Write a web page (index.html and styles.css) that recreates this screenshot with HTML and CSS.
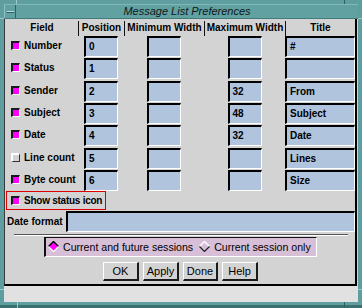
FILE: index.html
```html
<!DOCTYPE html>
<html>
<head>
<meta charset="utf-8">
<link rel="stylesheet" href="styles.css">
</head>
<body>
<div class="frame">
  <div class="titlebar">
    <div class="menubtn"><span class="bar"></span></div>
    <div class="title">Message List Preferences</div>
  </div>
  <div class="client">
    <div class="form">
      <div class="cols header">
        <div class="hcell">Field</div>
        <div class="hcell sepl">Position</div>
        <div class="hcell sepl">Minimum Width</div>
        <div class="hcell sepl">Maximum Width</div>
        <div class="hcell sepl">Title</div>
      </div>
      <div class="cols rows">
        <div class="fcell"><span class="cb on"></span>Number</div>
        <div class="cell"><div class="box pos">0</div></div>
        <div class="cell"><div class="box num"></div></div>
        <div class="cell"><div class="box num"></div></div>
        <div class="cell"><div class="box ttl">#</div></div>

        <div class="fcell"><span class="cb on"></span>Status</div>
        <div class="cell"><div class="box pos">1</div></div>
        <div class="cell"><div class="box num"></div></div>
        <div class="cell"><div class="box num"></div></div>
        <div class="cell"><div class="box ttl"></div></div>

        <div class="fcell"><span class="cb on"></span>Sender</div>
        <div class="cell"><div class="box pos">2</div></div>
        <div class="cell"><div class="box num"></div></div>
        <div class="cell"><div class="box num">32</div></div>
        <div class="cell"><div class="box ttl">From</div></div>

        <div class="fcell"><span class="cb on"></span>Subject</div>
        <div class="cell"><div class="box pos">3</div></div>
        <div class="cell"><div class="box num"></div></div>
        <div class="cell"><div class="box num">48</div></div>
        <div class="cell"><div class="box ttl">Subject</div></div>

        <div class="fcell"><span class="cb on"></span>Date</div>
        <div class="cell"><div class="box pos">4</div></div>
        <div class="cell"><div class="box num"></div></div>
        <div class="cell"><div class="box num">32</div></div>
        <div class="cell"><div class="box ttl">Date</div></div>

        <div class="fcell"><span class="cb"></span>Line count</div>
        <div class="cell"><div class="box pos">5</div></div>
        <div class="cell"><div class="box num"></div></div>
        <div class="cell"><div class="box num"></div></div>
        <div class="cell"><div class="box ttl">Lines</div></div>

        <div class="fcell"><span class="cb on"></span>Byte count</div>
        <div class="cell"><div class="box pos">6</div></div>
        <div class="cell"><div class="box num"></div></div>
        <div class="cell"><div class="box num"></div></div>
        <div class="cell"><div class="box ttl">Size</div></div>
      </div>
      <div class="togglerow"><div class="focus"><span class="cb on"></span><span class="flbl">Show status icon</span></div></div>
      <div class="datefmt"><span class="dlbl">Date format</span><div class="box wide"></div></div>
      <div class="sep"></div>
      <div class="radiobox">
        <span class="ritem"><svg class="dia" width="11" height="11" viewBox="0 0 11 11"><polygon points="5.5,0.5 10.5,5.5 5.5,10.5 0.5,5.5" fill="#ff00ff"/><polyline points="0.5,5.5 5.5,0.5 10.5,5.5" fill="none" stroke="#000" stroke-width="1.4"/><polyline points="0.5,5.5 5.5,10.5 10.5,5.5" fill="none" stroke="#fff" stroke-width="1.2"/></svg>Current and future sessions</span>
        <span class="ritem"><svg class="dia" width="11" height="11" viewBox="0 0 11 11"><polygon points="5.5,0.5 10.5,5.5 5.5,10.5 0.5,5.5" fill="#d8bfd8"/><polyline points="0.5,5.5 5.5,0.5 10.5,5.5" fill="none" stroke="#fff" stroke-width="1.4"/><polyline points="0.5,5.5 5.5,10.5 10.5,5.5" fill="none" stroke="#222" stroke-width="1.2"/></svg>Current session only</span>
      </div>
      <div class="buttons">
        <div class="btn w36">OK</div>
        <div class="btn w36">Apply</div>
        <div class="btn w35">Done</div>
        <div class="btn w36">Help</div>
      </div>
    </div>
    <div class="status"></div>
  </div>
  <span class="mark mt1"></span>
  <span class="mark mt2"></span>
  <span class="mark mb1"></span>
  <span class="mark mb2"></span>
  <span class="mark ml1"></span>
  <span class="mark ml2"></span>
  <span class="mark mr1"></span>
  <span class="mark mr2"></span>
</div>
</body>
</html>
```

FILE: styles.css
```css
html, body {
  margin: 0;
  padding: 0;
}
body {
  width: 362px;
  height: 308px;
  overflow: hidden;
  font-family: "Liberation Sans", Arial, sans-serif;
  color: #000;
}
.frame {
  position: relative;
  box-sizing: border-box;
  width: 362px;
  height: 308px;
  padding: 4px 4px 3px 4px;
  background: #5f9ea0;
  border-bottom: 3px solid #3b7070;
}
.titlebar {
  display: flex;
  height: 15px;
  box-sizing: border-box;
  border-top: 1px solid #80b8b8;
  border-bottom: 1px solid #437a7a;
  background: #62a1a2;
}
.menubtn {
  width: 12px;
  box-sizing: border-box;
  border-left: 1px solid #8cc2c2;
  border-right: 1px solid #2f5f60;
  display: flex;
  align-items: center;
  justify-content: center;
}
.bar {
  display: block;
  width: 7px;
  height: 2px;
  border-top: 1px solid #b8dede;
  border-bottom: 1px solid #2f5f60;
  box-sizing: border-box;
}
.title {
  flex: 1;
  text-align: center;
  font-style: italic;
  font-size: 11px;
  line-height: 13px;
  color: #101818;
}
.client {
  background: #d3d3d3;
  height: 283px;
}
.form {
  box-sizing: border-box;
  height: 267px;
  margin-right: 1px;
  padding: 2px 0 0 1px;
  border-left: 1px solid #3a3a3a;
  border-right: 2px solid #000;
  border-bottom: 2px solid #000;
  font-size: 10px;
  font-weight: bold;
}
.cols {
  display: grid;
  grid-template-columns: 72px 46px 80px 81px 70px;
}
.header {
  height: 15px;
}
.hcell {
  text-align: center;
  line-height: 14px;
  font-size: 10px;
  font-weight: bold;
}
.sepl {
  border-left: 1px solid #111;
}
.rows {
  grid-auto-rows: 21px;
  row-gap: 1.33px;
}
.fcell {
  display: flex;
  align-items: center;
  padding-left: 5px;
  padding-bottom: 2px;
  white-space: nowrap;
}
.cb {
  display: inline-block;
  flex: none;
  box-sizing: border-box;
  width: 9px;
  height: 9px;
  margin-right: 4px;
  border-top: 2px solid #fff;
  border-left: 2px solid #fff;
  border-right: 1px solid #333;
  border-bottom: 1px solid #333;
  background: #d3d3d3;
}
.cb.on {
  border-top-color: #1a1a1a;
  border-left-color: #1a1a1a;
  border-right-color: #fff;
  border-bottom-color: #fff;
  background: #ff00ff;
}
.cell {
  display: flex;
  justify-content: center;
}
.box {
  box-sizing: border-box;
  height: 21px;
  background: #b0c4de;
  border-top: 2px solid #000;
  border-left: 2px solid #000;
  border-right: 1px solid #fff;
  border-bottom: 1px solid #fff;
  padding-left: 3px;
  line-height: 18px;
  font-size: 10px;
  font-weight: bold;
}
.pos { width: 34px; }
.num { width: 34px; }
.ttl { width: 70px; }
.togglerow {
  height: 20px;
}
.focus {
  box-sizing: border-box;
  width: 100px;
  height: 19px;
  border: 1px solid #e00000;
  display: flex;
  align-items: center;
  padding-left: 4px;
  white-space: nowrap;
}
.flbl {
  letter-spacing: -0.25px;
}
.datefmt {
  display: flex;
  align-items: center;
  gap: 3px;
  height: 21px;
  padding-left: 1px;
}
.dlbl {
  white-space: nowrap;
}
.wide {
  flex: 1;
}
.sep {
  height: 0;
  margin: 2px 7px 0 8px;
  border-top: 1px solid #555;
  border-bottom: 1px solid #fff;
}
.radiobox {
  box-sizing: border-box;
  width: 273px;
  height: 20px;
  margin: 1px auto 0;
  background: #d8bfd8;
  border-top: 1px solid #111;
  border-left: 2px solid #111;
  border-right: 1px solid #fff;
  border-bottom: 1px solid #fff;
  display: flex;
  align-items: center;
  padding-left: 2px;
  gap: 6px;
  font-weight: normal;
  font-size: 10.6px;
  white-space: nowrap;
}
.ritem {
  display: flex;
  align-items: center;
  gap: 4px;
}
.dia {
  display: block;
}
.buttons {
  display: flex;
  justify-content: center;
  gap: 4px;
  margin-top: 5px;
}
.btn {
  box-sizing: border-box;
  height: 19px;
  border-top: 1px solid #fff;
  border-left: 1px solid #fff;
  border-right: 2px solid #1a1a1a;
  border-bottom: 2px solid #1a1a1a;
  text-align: center;
  line-height: 16px;
  font-size: 11px;
  font-weight: normal;
}
.w36 { width: 36px; }
.w35 { width: 35px; }
.status {
  height: 16px;
  background: #e1e1e1;
}
.mark {
  position: absolute;
  display: block;
}
.mt1 { left: 16px; top: 0; width: 1px; height: 4px; background: #9ccaca; }
.mt2 { left: 344px; top: 0; width: 1px; height: 4px; background: #2f5f60; }
.mb1 { left: 17px; top: 302px; width: 1px; height: 6px; background: #9ccaca; }
.mb2 { left: 344px; top: 302px; width: 1px; height: 6px; background: #2f5f60; }
.ml1 { left: 0; top: 18px; width: 4px; height: 1px; background: #9ccaca; }
.ml2 { left: 0; top: 289px; width: 4px; height: 1px; background: #9ccaca; }
.mr1 { left: 358px; top: 18px; width: 4px; height: 1px; background: #9ccaca; }
.mr2 { left: 358px; top: 289px; width: 4px; height: 1px; background: #9ccaca; }
```
